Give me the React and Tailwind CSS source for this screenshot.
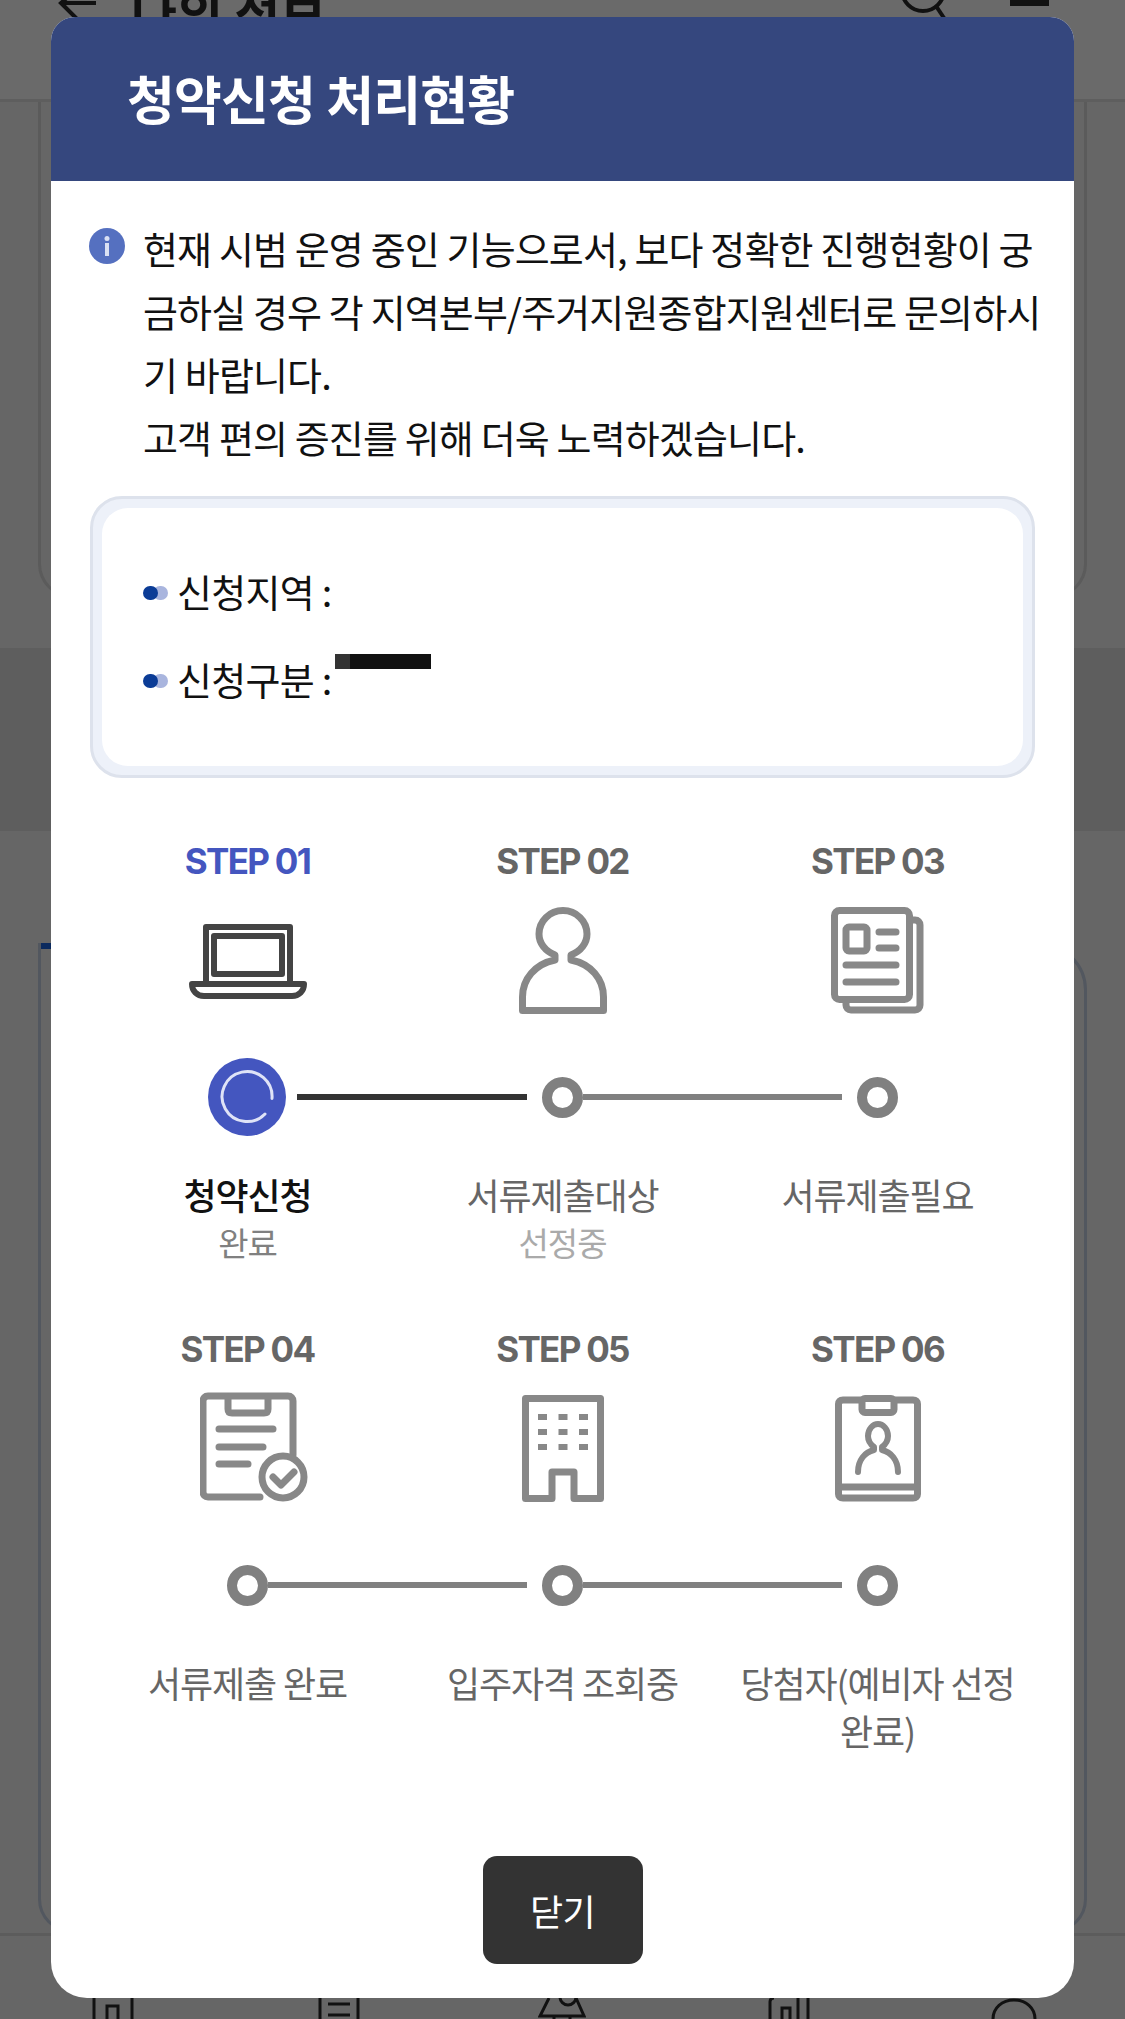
const KR = 'font-["Noto_Sans_CJK_KR","Noto_Sans",sans-serif]'

function Laptop() {
  return (
    <svg className="mb-[15px]" width="118" height="75" viewBox="0 0 118 75" fill="none" stroke="#444" strokeWidth="6" strokeLinejoin="round">
      <path d="M17 58V3h84v55" />
      <rect x="25" y="12" width="68" height="38" />
      <path d="M3 60h112c0 7-5 12-12 12H15C8 72 3 67 3 60z" />
    </svg>
  )
}

function Person() {
  return (
    <svg width="88" height="107" viewBox="0 0 88 107" fill="none" stroke="#888" strokeWidth="7" strokeLinejoin="round">
      <path d="M3.500 103.500h81V90C84.500 72 72 57 52 53v-5c10-4 16-12 16-21a24 23.500 0 1 0-48 0c0 9 6 17 16 21v5C16 57 3.500 72 3.500 90z" />
    </svg>
  )
}

function Papers() {
  return (
    <svg width="93" height="107" viewBox="0 0 93 107" fill="none" stroke="#888" strokeWidth="7" strokeLinejoin="round" strokeLinecap="round">
      <rect x="3.500" y="3.500" width="75" height="89" rx="5" />
      <path d="M80 13h4c3 0 5 2 5 5v80c0 3-2 5-5 5H20c-3 0-5-2-5-5v-4" />
      <rect x="15" y="20" width="21" height="24" rx="3" />
      <path d="M48 25h17M48 41h17M15 58h50M15 75h50" />
    </svg>
  )
}

function ClipCheck() {
  return (
    <svg className="ml-[13px]" width="108" height="110" viewBox="0 0 108 110" fill="none" stroke="#888" strokeWidth="7" strokeLinejoin="round" strokeLinecap="round">
      <path d="M60 105H8c-3 0-5-2-5-5V9c0-3 2-5 5-5h80c3 0 5 2 5 5v54" />
      <path d="M28 5v12c0 3 1 4 4 4h32c3 0 4-1 4-4V5" />
      <path d="M19 37h54M19 55h44M19 72h29" />
      <circle cx="83" cy="85" r="21" fill="#fff" />
      <path d="M73 85l8 8 13-13" strokeWidth="7" />
    </svg>
  )
}

function Building() {
  return (
    <svg width="82" height="107" viewBox="0 0 82 107" fill="none" stroke="#888" strokeWidth="7" strokeLinejoin="round">
      <path d="M3.500 103.500V3.500h75v100H52V77H30v26.500z" />
      <path d="M16 22h9M36.500 22h9M57 22h9M16 37h9M36.500 37h9M57 37h9M16 52h9M36.500 52h9M57 52h9" strokeWidth="6" />
    </svg>
  )
}

function Badge() {
  return (
    <svg width="86" height="107" viewBox="0 0 86 107" fill="none" stroke="#888" strokeWidth="7" strokeLinejoin="round" strokeLinecap="round">
      <path d="M26 5H8C5 5 3.500 6.500 3.500 9v90c0 2.500 1.500 4 4.500 4h70c3 0 4.500-1.500 4.500-4V9c0-2.500-1.500-4-4.500-4H60" />
      <rect x="27" y="3.500" width="32" height="14" rx="3" />
      <path d="M4 92h78" />
      <path d="M23 77c0-12 7-20 16-22v-3c-4-3-6-7-6-11 0-7 5-12 10-12s10 5 10 12c0 4-2 8-6 11v3c9 2 16 10 16 22" strokeWidth="6" />
    </svg>
  )
}

function Step({ no, icon, active }) {
  return (
    <div className="flex flex-col items-center">
      <div className={`h-[45px] font-['Inter'] text-[35px] leading-[45px] font-bold tracking-[-1.7px] ${active ? 'text-[#4456bf]' : 'text-[#666]'}`}>
        STEP {no}
      </div>
      <div className="mt-[23px] flex h-[107px] items-end">{icon}</div>
    </div>
  )
}

function StepLabel({ label, sub, active, subColor }) {
  return (
    <div className="flex flex-col items-center text-center break-keep">
      <div className={`text-[36px] leading-[48px] tracking-[-1.1px] ${active ? 'text-[#111] font-medium' : 'text-[#666]'}`}>{label}</div>
      {sub && <div className={`text-[33px] leading-[48px] tracking-[-1px] ${subColor}`}>{sub}</div>}
    </div>
  )
}

function Node() {
  return <div className="h-[41px] w-[41px] shrink-0 rounded-full border-[10px] border-[#808080] bg-white" />
}

function Spinner() {
  return (
    <div className="flex h-[78px] w-[78px] shrink-0 items-center justify-center rounded-full bg-[#4456bf]">
      <svg width="56" height="56" viewBox="0 0 56 56" fill="none" stroke="#dfe3f7" strokeWidth="3" strokeLinecap="round">
        <path d="M53 29.500A25 25 0 1 0 46 45" />
      </svg>
    </div>
  )
}

const row1 = [
  { no: '01', icon: <Laptop />, active: true },
  { no: '02', icon: <Person /> },
  { no: '03', icon: <Papers /> },
]
const row2 = [
  { no: '04', icon: <ClipCheck /> },
  { no: '05', icon: <Building /> },
  { no: '06', icon: <Badge /> },
]

function Bullet({ children }) {
  return (
    <div className="flex items-center text-[38px] leading-[48px] tracking-[-0.7px] text-[#111]">
      <span className="relative mr-[9px] mt-[3px] h-[14px] w-[25px] shrink-0">
        <span className="absolute left-[10px] top-0 h-[14px] w-[15px] rounded-full bg-[#a9b5de]" />
        <span className="absolute left-0 top-0 h-[14px] w-[15px] rounded-full bg-[#0b3c96]" />
      </span>
      {children}
    </div>
  )
}

function Background() {
  return (
    <div className="flex h-[2019px] flex-col bg-[#666]">
      <div className="h-[102px] shrink-0 border-b-[3px] border-[#5e5e5e] bg-[#6a6a6a]">
        <div className="flex h-[20px] items-end justify-between overflow-hidden pl-[58px] pr-[76px]">
          <div className="flex items-end">
            <svg width="38" height="20" viewBox="0 0 38 20" fill="none" stroke="#111" strokeWidth="4">
              <path d="M38 3H4M18-10 3 3l16 16" />
            </svg>
            <span className="ml-[35px] text-[50px] leading-[20px] font-bold text-[#111]">나의 정보</span>
          </div>
          <div className="flex items-start gap-[63px]">
            <svg width="47" height="20" viewBox="0 0 47 20" fill="none" stroke="#111" strokeWidth="4">
              <circle cx="23" cy="-10" r="21" />
              <path d="M36 6l8 12" />
            </svg>
            <span className="h-[6px] w-[39px] bg-[#111]" />
          </div>
        </div>
      </div>
      <div className="mx-[38px] h-[496px] shrink-0 rounded-b-[34px] border-x-[3px] border-b-[3px] border-[#5b5b5b]" />
      <div className="mt-[50px] h-[183px] shrink-0 bg-[#5e5e5e]" />
      <div className="relative mx-[38px] mt-[112px] h-[990px] shrink-0 rounded-tr-[47px] rounded-b-[34px] border-[3px] border-[#52575f]">
        <span className="absolute left-0 top-[-3px] h-[6px] w-[10px] bg-[#0b2a5e]" />
      </div>
      <div className="flex h-[86px] shrink-0 items-end border-t-[3px] border-[#5c5c5c] pl-[92px]">
        <svg width="42" height="21" viewBox="0 0 42 21" fill="none" stroke="#111" strokeWidth="3">
          <path d="M2 0v21M40 0v21M15 21V8h11v13" />
        </svg>
        <svg className="ml-[184px]" width="42" height="21" viewBox="0 0 42 21" fill="none" stroke="#111" strokeWidth="3">
          <path d="M2 0v21M40 0v21M10 6h22M10 17h22" />
        </svg>
        <svg className="ml-[178px]" width="48" height="21" viewBox="0 0 48 21" fill="none" stroke="#111" strokeWidth="3">
          <path d="M11 0 2 18h44L38 0M16 18v3M32 18v3" />
          <circle cx="30" cy="-1" r="8" />
        </svg>
        <svg className="ml-[182px]" width="42" height="21" viewBox="0 0 42 21" fill="none" stroke="#111" strokeWidth="3">
          <path d="M2 21V4q0-4 4-4M40 0v21M14 21V10h8v11M30 0v21" />
        </svg>
        <svg className="ml-[181px]" width="46" height="21" viewBox="0 0 46 21" fill="none" stroke="#111" strokeWidth="3">
          <path d="M2 21C2 10 11 2 23 2s21 8 21 19" />
        </svg>
      </div>
    </div>
  )
}

export default function App() {
  return (
    <div className={`relative h-[2019px] w-[1125px] overflow-hidden ${KR}`}>
      <Background />

      <div className="absolute left-[51px] top-[17px] flex h-[1981px] w-[1023px] flex-col overflow-hidden rounded-t-[24px] rounded-b-[36px] bg-white">
        <div className="h-[164px] shrink-0 bg-[#35477e] pl-[76px] pt-[46px] text-[52px] leading-[70px] font-bold tracking-[-0.8px] text-white">
          청약신청 처리현황
        </div>

        <div className="flex pl-[38px] pr-[28px] pt-[35px]">
          <svg className="mt-[12px] shrink-0" width="36" height="36" viewBox="0 0 36 36">
            <circle cx="18" cy="18" r="18" fill="#5570c0" />
            <circle cx="18" cy="10.500" r="2.500" fill="#d9e0f3" />
            <rect x="16" y="15" width="4" height="13" fill="#d9e0f3" />
          </svg>
          <p className="ml-[18px] text-[38px] leading-[63px] tracking-[-0.85px] text-[#111]">
            현재 시범 운영 중인 기능으로서, 보다 정확한 진행현황이 궁금하실 경우 각 지역본부/주거지원종합지원센터로 문의하시기 바랍니다.
            <br />
            고객 편의 증진를 위해 더욱 노력하겠습니다.
          </p>
        </div>

        <div className="mx-[39px] mt-[28px] h-[282px] shrink-0 rounded-[32px] border-[3px] border-[#dde2ec] bg-[#edf1f9] p-[9px]">
          <div className="flex h-full flex-col gap-[40px] rounded-[26px] bg-white pl-[41px] pt-[59px]">
            <Bullet>신청지역 :</Bullet>
            <div className="relative">
              <Bullet>신청구분 :</Bullet>
              <span className="absolute left-[192px] top-[-1px] flex h-[15px] w-[96px]">
                <span className="w-[15px] bg-[#333]" />
                <span className="flex-1 bg-[#111]" />
              </span>
            </div>
          </div>
        </div>

        <div className="mx-[39px] mt-[61px]">
          <div className="grid grid-cols-3">
            {row1.map((s) => (
              <Step key={s.no} {...s} />
            ))}
          </div>
          <div className="mt-[44px] flex h-[78px] items-center pl-[118px]">
            <Spinner />
            <div className="ml-[11px] h-[6px] w-[230px] bg-[#333]" />
            <div className="ml-[15px]"><Node /></div>
            <div className="h-[6px] w-[259px] bg-[#808080]" />
            <div className="ml-[15px]"><Node /></div>
          </div>
          <div className="mt-[34px] grid h-[149px] grid-cols-3">
            <StepLabel label="청약신청" sub="완료" active subColor="text-[#808080]" />
            <StepLabel label="서류제출대상" sub="선정중" subColor="text-[#aaa]" />
            <StepLabel label="서류제출필요" />
          </div>

          <div className="mt-[8px] grid grid-cols-3">
            {row2.map((s) => (
              <Step key={s.no} {...s} />
            ))}
          </div>
          <div className="mt-[44px] flex h-[78px] items-center pl-[137px]">
            <Node />
            <div className="h-[6px] w-[259px] bg-[#808080]" />
            <div className="ml-[15px]"><Node /></div>
            <div className="h-[6px] w-[259px] bg-[#808080]" />
            <div className="ml-[15px]"><Node /></div>
          </div>
          <div className="mt-[34px] grid h-[149px] grid-cols-3">
            <StepLabel label="서류제출 완료" />
            <StepLabel label="입주자격 조회중" />
            <StepLabel label="당첨자(예비자 선정 완료)" />
          </div>
        </div>

        <button className="mx-auto mt-[49px] h-[108px] w-[160px] shrink-0 rounded-[14px] bg-[#333] text-[36px] tracking-[-0.5px] text-white">
          닫기
        </button>
      </div>
    </div>
  )
}
